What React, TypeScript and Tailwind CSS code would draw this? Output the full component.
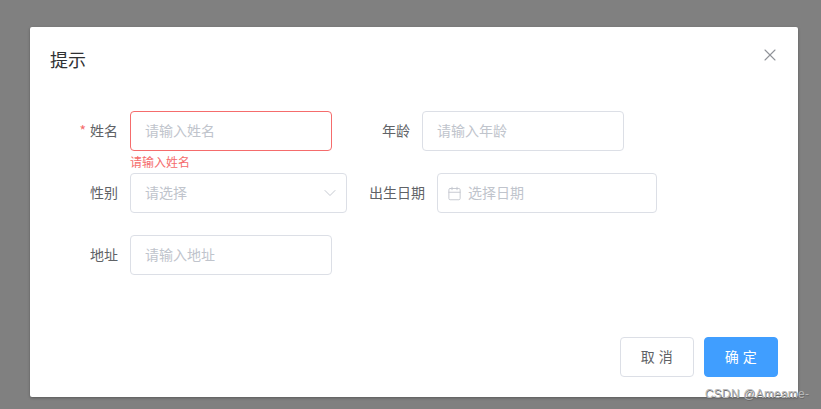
import { Calendar, ChevronDown, X } from "lucide-react";
import React from "react";

const font = "font-['Noto_Sans_CJK_SC','Liberation_Sans',sans-serif]";

const Label = ({ text, required }: { text: string; required?: boolean }) => (
  <label className="w-20 shrink-0 pr-3 text-right text-sm leading-[38px] text-[#606266]">
    {required && <span className="mr-1 text-[#f56c6c]">*</span>}
    {text}
  </label>
);

const TextInput = ({ placeholder, error }: { placeholder: string; error?: boolean }) => (
  <div
    className={`flex h-10 w-[202px] items-center rounded border px-[15px] pb-[2px] text-sm text-[#c0c4cc] ${
      error ? "border-[#f56c6c]" : "border-[#dcdfe6]"
    }`}
  >
    <span className="-ml-px">{placeholder}</span>
  </div>
);

const App = () => {
  return (
    <main className={`relative h-[409px] w-[821px] overflow-hidden bg-[#808080] pt-[27px] pl-[30px] ${font}`}>
      <section className="flex h-[370px] w-[768px] flex-col rounded-[2px] bg-white shadow-[0_1px_3px_rgba(0,0,0,0.3)]">
        <header className="flex items-start justify-between pt-5 pr-5 pl-5">
          <h2 className="text-lg leading-6 text-[#303133]">提示</h2>
          <X size={20} strokeWidth={1.3} className="-mt-[2px] -mr-[2px] text-[#909399]" />
        </header>

        <form className="flex flex-1 flex-col gap-[22px] pt-10 pl-5">
          <div className="flex">
            <div className="relative mr-[10px] flex">
              <Label text="姓名" required />
              <TextInput placeholder="请输入姓名" error />
              <span className="absolute top-full left-20 text-xs leading-[22px] text-[#f56c6c]">请输入姓名</span>
            </div>
            <div className="flex">
              <Label text="年龄" />
              <TextInput placeholder="请输入年龄" />
            </div>
          </div>

          <div className="flex">
            <div className="mr-[10px] flex">
              <Label text="性别" />
              <div className="flex h-10 w-[217px] items-center justify-between rounded border border-[#dcdfe6] pr-[6px] pl-[14px] text-sm text-[#c0c4cc]">
                <span className="pb-[2px]">请选择</span>
                <ChevronDown size={20} strokeWidth={1.1} />
              </div>
            </div>
            <div className="flex">
              <Label text="出生日期" />
              <div className="flex h-10 w-[220px] items-center gap-[6px] rounded border border-[#dcdfe6] pl-[9px] text-sm text-[#c0c4cc]">
                <Calendar size={15} strokeWidth={1.4} />
                <span className="pb-[2px]">选择日期</span>
              </div>
            </div>
          </div>

          <div className="flex">
            <Label text="地址" />
            <TextInput placeholder="请输入地址" />
          </div>
        </form>

        <footer className="flex justify-end gap-[10px] pr-5 pb-5">
          <button className="h-10 w-[74px] rounded border border-[#dcdfe6] bg-white pb-[2px] text-sm tracking-[0.5px] text-[#606266]">
            取 消
          </button>
          <button className="h-10 w-[74px] rounded border border-[#409eff] bg-[#409eff] pb-[2px] text-sm tracking-[0.5px] text-white">
            确 定
          </button>
        </footer>
      </section>

      <span className="absolute top-[386px] left-[705px] font-['Liberation_Sans',sans-serif] text-xs leading-4 tracking-[0.2px] whitespace-nowrap text-[#b8b8b8] [text-shadow:0.5px_0.5px_0_#6a6a6a]">
        CSDN @Ameame-
      </span>
    </main>
  );
};

export default App;
